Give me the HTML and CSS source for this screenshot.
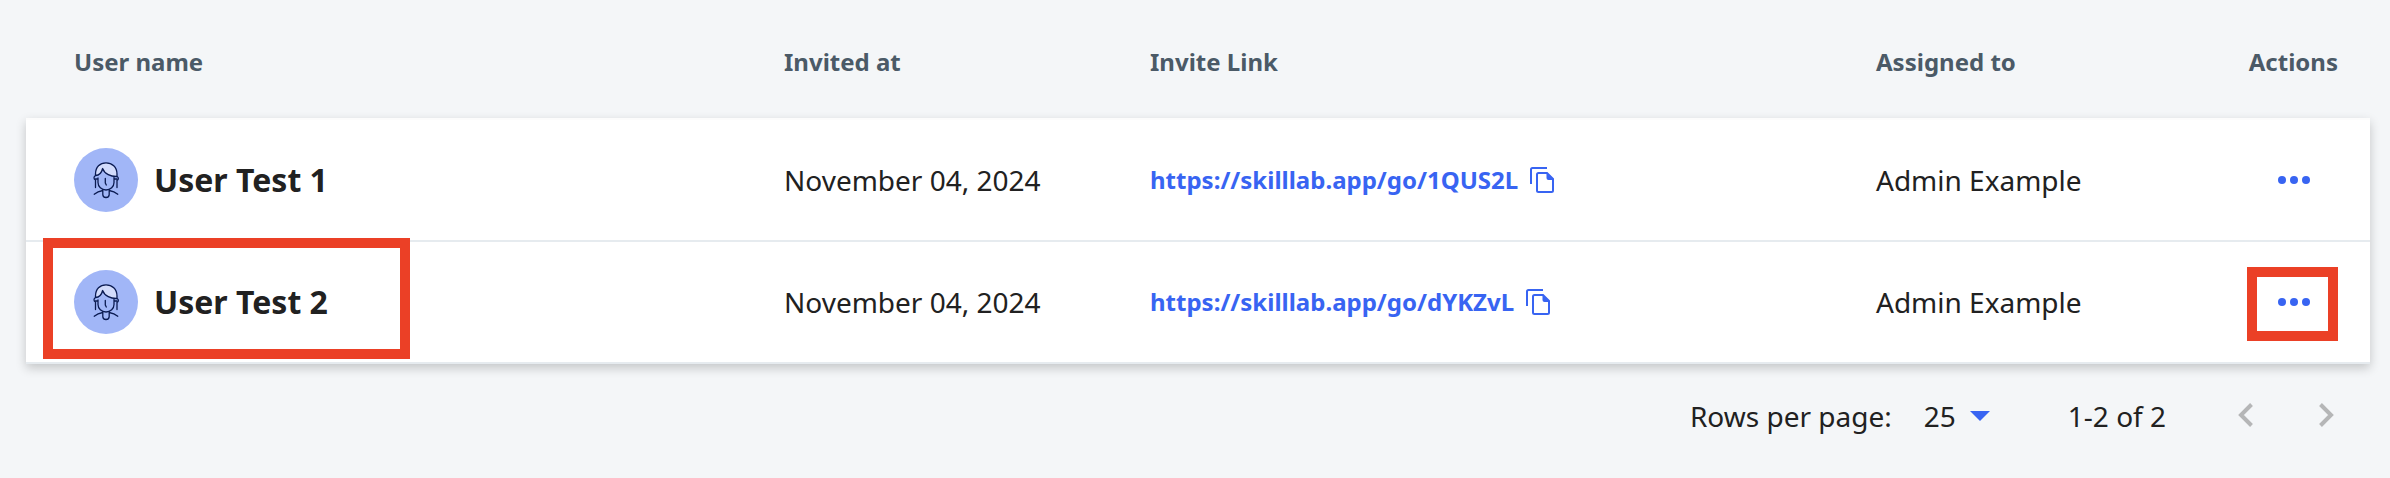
FILE: index.html
```
<!DOCTYPE html>
<html lang="en">
<head>
    <meta charset="utf-8">
    <title>Users</title>
    <link rel="stylesheet" href="styles.css">
</head>
<body>
<svg class="sprite" width="0" height="0">
    <symbol id="avatar" viewBox="0 0 64 64">
        <g fill="none" stroke="#0b1b52" stroke-width="1.3" stroke-linecap="round" stroke-linejoin="round">
            <path fill="#d2dbfb" d="M21.5 27.5V26C21.5 19 26 14.8 32 14.8S43 19 43 26v2.500c-6 .3-12.500-2.500-14.400-8-1 4.500-3.500 6.800-7.100 7z"/>
            <path d="M21.500 27.500c-2 1-2 3.500 0 4.500M43 28.500c1.800.8 1.800 3 0 4M21.500 32v7.500M43 32v7.500"/>
            <path d="M24 30v4.500c0 4 3.500 7.500 8 7.500s8-3.500 8-7.500v-5M21.500 31H24M40 31h3"/>
            <path d="M31.300 30.500v4.500l1 2"/>
            <path d="M28.800 42v4.500c0 4 6.400 4 6.400 0V42M28.800 42.500c-3 .5-6 1.600-8.600 3.700M35.200 42.500c3 .5 6 1.600 8.600 3.700"/>
        </g>
    </symbol>
    <symbol id="copy" viewBox="0 0 24 26">
        <g fill="none" stroke="currentColor" stroke-width="2">
            <path d="M1 17V2.500Q1 1 2.500 1H17"/>
            <path d="M8.500 6H17l6 6v11.500Q23 25 21.500 25h-13Q7 25 7 23.500v-16Q7 6 8.500 6z"/>
        </g>
        <path fill="currentColor" d="M16.500 6l7 7h-5q-2 0-2-2z"/>
    </symbol>
    <symbol id="more" viewBox="0 0 32 8">
        <g fill="currentColor">
            <circle cx="4" cy="4" r="4"/>
            <circle cx="16" cy="4" r="4"/>
            <circle cx="28" cy="4" r="4"/>
        </g>
    </symbol>
</svg>

<table class="users">
    <thead>
    <tr>
        <th class="col-name">User name</th>
        <th class="col-date">Invited at</th>
        <th class="col-link">Invite Link</th>
        <th class="col-assigned">Assigned to</th>
        <th class="col-actions">Actions</th>
    </tr>
    </thead>
    <tbody>
    <tr class="first">
        <td>
            <div class="user">
                <svg class="avatar"><use href="#avatar"/></svg>
                <span>User Test 1</span>
            </div>
        </td>
        <td>November 04, 2024</td>
        <td>
            <div class="link">
                <a>https://skilllab.app/go/1QUS2L</a>
                <svg class="copy"><use href="#copy"/></svg>
            </div>
        </td>
        <td>Admin Example</td>
        <td><div class="actions"><svg class="more"><use href="#more"/></svg></div></td>
    </tr>
    <tr>
        <td>
            <div class="user">
                <svg class="avatar"><use href="#avatar"/></svg>
                <span>User Test 2</span>
                <div class="mark mark-user"></div>
            </div>
        </td>
        <td>November 04, 2024</td>
        <td>
            <div class="link">
                <a>https://skilllab.app/go/dYKZvL</a>
                <svg class="copy"><use href="#copy"/></svg>
            </div>
        </td>
        <td>Admin Example</td>
        <td>
            <div class="actions">
                <svg class="more"><use href="#more"/></svg>
                <div class="mark mark-actions"></div>
            </div>
        </td>
    </tr>
    </tbody>
</table>

<footer class="pagination">
    <span>Rows per page:</span>
    <span class="per-page">25</span>
    <svg class="caret" viewBox="0 0 20 10"><path fill="currentColor" d="M0 0h20L10 10z"/></svg>
    <span class="range">1-2 of 2</span>
    <svg class="chevron" viewBox="0 0 15 24"><path d="M13.500 1.500L3 12l10.500 10.500"/></svg>
    <svg class="chevron next" viewBox="0 0 15 24"><path d="M1.500 1.500L12 12 1.500 22.500"/></svg>
</footer>
</body>
</html>
```
FILE: styles.css
```
body {
    margin: 0;
    padding: 0 20px 0 26px;
    height: 478px;
    box-sizing: border-box;
    overflow: hidden;
    background: #f4f6f8;
    color: #212121;
    font: 28px/40px "Noto Sans", sans-serif
}

.sprite {
    position: absolute
}

.users {
    width: 2344px;
    table-layout: fixed;
    border-collapse: separate;
    border-spacing: 0
}

th, td {
    box-sizing: border-box;
    padding: 0 0 0 48px;
    text-align: left;
    vertical-align: middle
}

th {
    height: 118px;
    padding-top: 6px;
    color: #4b5a67;
    font-size: 24px;
    font-weight: 700
}

td {
    height: 122px;
    background: #fff;
    border-bottom: 2px solid #e6ebef
}

.first td {
    height: 124px;
    border-top: 2px solid #fcfcfc
}

tbody {
    box-shadow: 0 4px 10px rgba(0, 0, 0, .2)
}

.col-name {
    width: 710px
}

.col-date {
    width: 366px
}

.col-link {
    width: 726px
}

.col-assigned {
    width: 330px
}

th.col-actions {
    padding: 6px 32px 0 0;
    text-align: right
}

.user, .link, .actions {
    display: flex;
    align-items: center
}

.user {
    position: relative;
    gap: 16px;
    font-size: 32px;
    font-weight: 700
}

.avatar {
    width: 64px;
    height: 64px;
    border-radius: 50%;
    background: #a1b6f7
}

.link {
    gap: 12px;
    color: #3864f2;
    font-size: 24px;
    font-weight: 700
}

.copy {
    width: 24px;
    height: 26px
}

.actions {
    position: relative;
    justify-content: flex-end;
    padding-right: 60px;
    color: #3864f2
}

.more {
    width: 32px;
    height: 8px
}

.mark {
    position: absolute;
    box-sizing: border-box;
    border: 10px solid #eb4026
}

.mark-user {
    left: -31px;
    top: -32px;
    width: 367px;
    height: 121px
}

.mark-actions {
    right: 32px;
    top: -31px;
    width: 91px;
    height: 74px
}

.pagination {
    display: flex;
    align-items: center;
    justify-content: flex-end;
    padding: 32px 36px 0 0
}

.per-page {
    margin-left: 32px
}

.caret {
    width: 20px;
    height: 10px;
    margin-left: 14px;
    color: #3864f2
}

.range {
    margin: 0 72px 0 78px
}

.chevron {
    width: 15px;
    height: 24px;
    margin-top: -3px;
    fill: none;
    stroke: #b5b6b7;
    stroke-width: 4
}

.next {
    margin-left: 66px
}
```
